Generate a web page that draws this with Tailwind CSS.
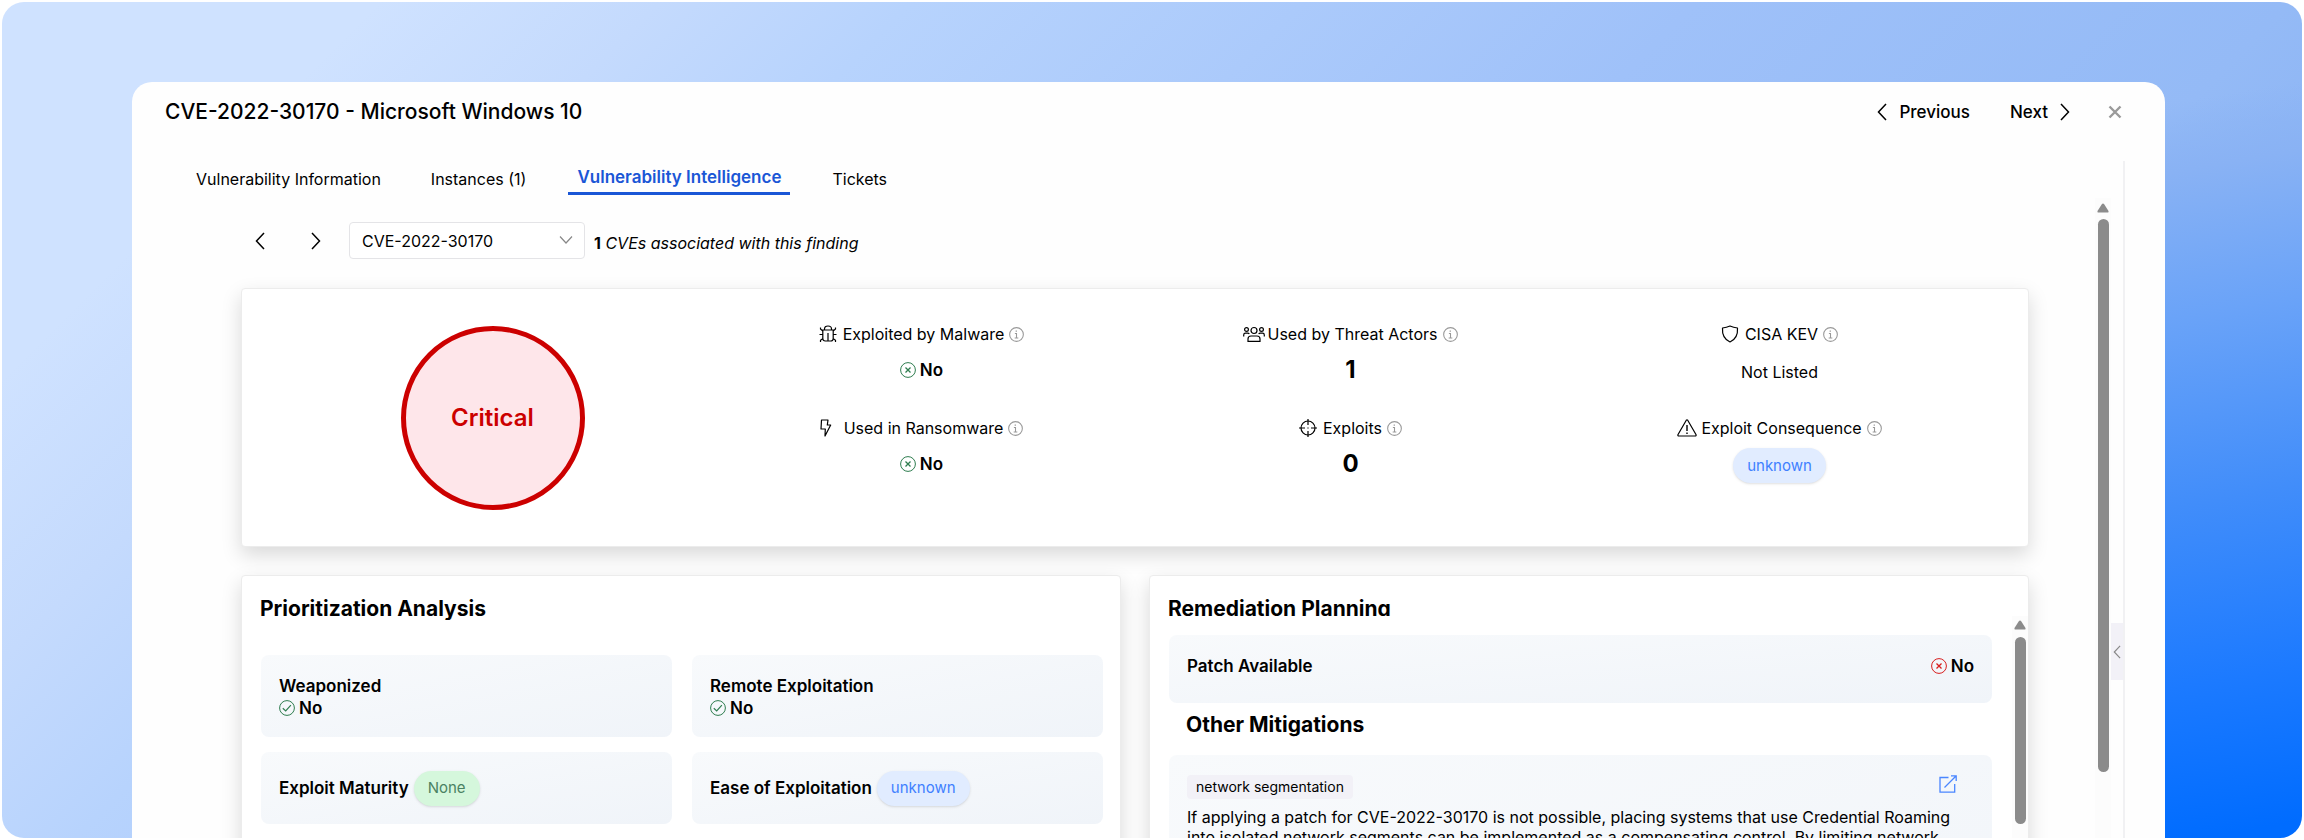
<!doctype html>
<html lang="en">
<head>
  <meta charset="UTF-8">
  <meta name="viewport" content="width=device-width, initial-scale=1.0">
  <title>CVE-2022-30170 - Microsoft Windows 10</title>
  <script src="https://cdn.jsdelivr.net/npm/@tailwindcss/browser@4"></script>
</head>

<body class="bg-white p-[2px] font-['Inter',sans-serif] text-base leading-6 text-black">

  <!-- Icon sprite -->
  <svg class="hidden">
    <symbol id="chevron-left" viewBox="0 0 10 18" fill="none" stroke="currentColor" stroke-width="1.5"><path d="M9 1 1.5 9 9 17"/></symbol>
    <symbol id="chevron-right" viewBox="0 0 10 18" fill="none" stroke="currentColor" stroke-width="1.5"><path d="m1 1 7.500 8L1 17"/></symbol>
    <symbol id="info" viewBox="0 0 14 14" fill="none" stroke="currentColor"><circle cx="7" cy="7" r="6.400"/><path d="M5.500 6H7v4.300M5.300 10.300h3.400"/><path d="M6.200 3.800h1.200" stroke-width="1.300"/></symbol>
    <symbol id="x-circle" viewBox="0 0 16 16" fill="none" stroke="currentColor"><circle cx="8" cy="8" r="7.400"/><path d="m5.500 5.500 5 5m0-5-5 5" stroke-width="1.300"/></symbol>
    <symbol id="check-circle" viewBox="0 0 16 16" fill="none" stroke="currentColor"><circle cx="8" cy="8" r="7.400"/><path d="m3.800 8.300 2.900 2.600 5.200-5.700" stroke-width="1.200"/></symbol>
    <symbol id="bug" viewBox="0 0 18 18" fill="none" stroke="currentColor" stroke-width="1.200"><path d="M3.800 5h10.400v8.500q0 2.500-2.500 2.500H6.300q-2.500 0-2.500-2.500zM5.500 5V4q0-3 3.500-3t3.500 3v1M9 8v8M.5 9.500h3.300M14.200 9.500h3.300M3.800 6 1.500 4V2.500M14.200 6l2.300-2V2.500M4 13.500l-2.500 1.700V17M14 13.500l2.500 1.700V17"/></symbol>
    <symbol id="people" viewBox="0 0 22 16" fill="none" stroke="currentColor" stroke-width="1.200"><circle cx="11" cy="4.500" r="3"/><circle cx="3.500" cy="3.500" r="1.900"/><circle cx="18.500" cy="3.500" r="1.900"/><path d="M5 15.300v-2.300q0-3 3-3h6q3 0 3 3v2.300zM.7 10.500V9q0-1.800 1.800-1.800h2.300q1 0 1.500.8M21.300 10.500V9q0-1.800-1.800-1.800h-2.300q-1 0-1.500.8"/></symbol>
    <symbol id="lightning" viewBox="0 0 12 18" fill="none" stroke="currentColor" stroke-width="1.200" stroke-linejoin="round"><path d="M1.500 1H8L7.300 6h3.400L5 17l.3-7H1z"/></symbol>
    <symbol id="crosshair" viewBox="0 0 18 18" fill="none" stroke="currentColor" stroke-width="1.200"><circle cx="9" cy="9" r="7"/><path d="M9 0v6M9 12v6M0 9h6M12 9h6M9 8.500v1"/></symbol>
    <symbol id="shield" viewBox="0 0 18 18" fill="none" stroke="currentColor" stroke-width="1.200" stroke-linejoin="round"><path d="M9 1q-3.500 1.500-7.500 2c-.5 7 2 11.500 7.500 14 5.500-2.500 8-7 7.500-14Q12.500 2.500 9 1z"/></symbol>
    <symbol id="warning" viewBox="0 0 20 18" fill="none" stroke="currentColor" stroke-width="1.200" stroke-linejoin="round"><path d="M9.300 1.200q.7-.8 1.400 0l8.400 14.600q.2 1.200-.8 1.200H1.700q-1 0-.8-1.200z"/><path d="M10 6v6M10 13.500v1.500" stroke-width="1.400"/></symbol>
    <symbol id="external" viewBox="0 0 18 18" fill="none" stroke="currentColor" stroke-width="1.300"><path d="M9.500 2.500H1v14.700h14.700V9M5.500 12.500 17 1M12 .8h5.200V6"/></symbol>
    <symbol id="arrow-up" viewBox="0 0 12 10"><path d="M6 .5q.7 0 1.200.8L11.500 8q.5 1.500-.8 1.500H1.300Q0 9.500.5 8l4.300-6.700Q5.300.5 6 .5z" fill="currentColor"/></symbol>
  </svg>

  <div class="flex h-[calc(100vh-4px)] flex-col overflow-hidden rounded-[22px] bg-[linear-gradient(170deg,#89b2f400_12%,#89b2f4_20%,#6aa3f8_37%,#418dfa_59%,#1c7aff_80%,#006cff_98%),linear-gradient(135deg,#cfe2ff_12%,#c4dafd_21%,#b7d3fd_29%,#9fc1f9_54%,#94baf6_73%,#8ab3f4_82%)] bg-[length:142px_100%,100%_100%] bg-right bg-no-repeat pt-20 pr-[137px] pl-[130px]">
    <div class="flex min-h-0 flex-1 flex-col rounded-t-[20px] bg-[#fefefe]">

      <!-- Title bar -->
      <header class="mb-[19px] flex h-15 shrink-0 items-center pr-[43px] pl-[33px]">
        <h1 class="flex-1 text-[21px] font-medium">CVE-2022-30170 - Microsoft Windows 10</h1>
        <button class="flex items-center gap-3 text-[17px] font-medium"><svg class="h-[18px] w-[10px]"><use href="#chevron-left"/></svg>Previous</button>
        <button class="ml-10 flex items-center gap-3 text-[17px] font-medium">Next<svg class="h-[18px] w-[10px]"><use href="#chevron-right"/></svg></button>
        <button class="ml-[38px] text-[#9a9a9a]" aria-label="Close">
          <svg class="size-3.5" viewBox="0 0 14 14" fill="none" stroke="currentColor" stroke-width="2.400"><path d="m1.500 1.500 11 11M12.500 1.500l-11 11"/></svg>
        </button>
      </header>

      <div class="mr-10 flex min-h-0 flex-1 flex-col border-r-2 border-[#f1f1f3]">
        <!-- Tabs -->
        <nav class="flex h-[37px] shrink-0 items-center gap-[34px] pb-0.5 pl-14">
          <button class="px-2">Vulnerability Information</button>
          <button class="px-2">Instances (1)</button>
          <button class="h-[34px] self-start border-b-[3px] border-[#1a56d6] px-[9px] text-[17px] font-semibold text-[#1a56d6]">Vulnerability Intelligence</button>
          <button class="px-2">Tickets</button>
        </nav>

        <div class="flex min-h-0 flex-1">
          <main class="min-w-0 flex-1 overflow-hidden pt-6 pr-[66px] pl-[109px]">

            <!-- CVE picker -->
            <div class="mb-[29px] flex h-[37px] items-center">
              <button class="flex w-[38px] justify-center" aria-label="Previous CVE"><svg class="h-[18px] w-[10px]"><use href="#chevron-left"/></svg></button>
              <button class="ml-[18px] flex w-[38px] justify-center" aria-label="Next CVE"><svg class="h-[18px] w-[10px]"><use href="#chevron-right"/></svg></button>
              <div class="relative ml-3.5">
                <select aria-label="CVE" class="h-[37px] w-[236px] appearance-none rounded border border-[#e4e4e7] bg-white px-3">
                  <option>CVE-2022-30170</option>
                </select>
                <svg class="pointer-events-none absolute top-3.5 right-3 h-2 w-3.5 text-[#888888]" viewBox="0 0 14 8" fill="none" stroke="currentColor" stroke-width="1.200"><path d="m1 .5 6 6.500 6-6.500"/></svg>
              </div>
              <p class="pt-1 pl-[9px]"><strong class="font-bold">1</strong> <em>CVEs associated with this finding</em></p>
            </div>

            <!-- Summary -->
            <section class="mb-7 grid min-h-[259px] grid-cols-4 rounded border border-[#ececec] bg-white pt-[33px] pr-[34px] pb-[30px] pl-9 shadow-[0_8px_20px_rgba(0,0,0,0.15)]">
              <div class="mt-1 flex size-[184px] items-center justify-center justify-self-center rounded-full border-[5px] border-[#cc0000] bg-[#fee6ea] text-2xl font-semibold text-[#cc0000]">Critical</div>
              <div class="flex flex-col items-center">
                <h2 class="flex items-center"><svg class="mr-1.5 size-[18px]"><use href="#bug"/></svg>Exploited by Malware<svg class="ml-[5px] size-[15px] text-[#999999]"><use href="#info"/></svg></h2>
                <p class="mt-1.5 mb-7 flex h-9 items-center gap-1 text-[17px] font-semibold"><svg class="size-4 text-[#2e7d4f]"><use href="#x-circle"/></svg>No</p>
                <h2 class="flex items-center"><svg class="mr-3 h-[18px] w-3"><use href="#lightning"/></svg>Used in Ransomware<svg class="ml-[5px] size-[15px] text-[#999999]"><use href="#info"/></svg></h2>
                <p class="mt-1.5 flex h-9 items-center gap-1 text-[17px] font-semibold"><svg class="size-4 text-[#2e7d4f]"><use href="#x-circle"/></svg>No</p>
              </div>
              <div class="flex flex-col items-center">
                <h2 class="flex items-center"><svg class="mr-0.5 h-4 w-[22px]"><use href="#people"/></svg>Used by Threat Actors<svg class="ml-[5px] size-[15px] text-[#999999]"><use href="#info"/></svg></h2>
                <p class="mt-1.5 mb-7 flex h-9 items-center text-2xl font-bold">1</p>
                <h2 class="flex items-center"><svg class="mr-1.5 size-[18px]"><use href="#crosshair"/></svg>Exploits<svg class="ml-[5px] size-[15px] text-[#999999]"><use href="#info"/></svg></h2>
                <p class="mt-1.5 flex h-9 items-center text-2xl font-bold">0</p>
              </div>
              <div class="flex flex-col items-center">
                <h2 class="flex items-center"><svg class="mr-1.5 size-[18px]"><use href="#shield"/></svg>CISA KEV<svg class="ml-[5px] size-[15px] text-[#999999]"><use href="#info"/></svg></h2>
                <p class="mt-2 mb-[26px] flex h-9 items-center">Not Listed</p>
                <h2 class="flex items-center"><svg class="mr-1 h-[18px] w-5"><use href="#warning"/></svg>Exploit Consequence<svg class="ml-[5px] size-[15px] text-[#999999]"><use href="#info"/></svg></h2>
                <p class="mt-2 flex h-[35px] items-center rounded-full bg-[#e1ecff] px-3.5 text-[15px] text-[#4080ff] shadow-sm">unknown</p>
              </div>
            </section>

            <div class="grid grid-cols-2 gap-7">
              <!-- Prioritization -->
              <section class="h-[420px] rounded border border-[#ececec] bg-white pt-5 pr-[17px] pl-[19px] shadow-[0_8px_20px_rgba(0,0,0,0.15)]">
                <h2 class="-ml-px h-6 overflow-hidden text-[21px] leading-[26px] font-bold">Prioritization Analysis</h2>
                <div class="mt-[35px] grid grid-cols-2 gap-x-5 gap-y-[15px]">
                  <div class="h-[82px] rounded-lg bg-linear-to-br from-[#f8fafc] to-[#f0f4f9] px-[18px] pt-5 text-[17px] leading-[22px] font-semibold">
                    <h3>Weaponized</h3>
                    <p class="flex items-center gap-1"><svg class="size-4 text-[#2e7d4f]"><use href="#check-circle"/></svg>No</p>
                  </div>
                  <div class="h-[82px] rounded-lg bg-linear-to-br from-[#f8fafc] to-[#f0f4f9] px-[18px] pt-5 text-[17px] leading-[22px] font-semibold">
                    <h3>Remote Exploitation</h3>
                    <p class="flex items-center gap-1"><svg class="size-4 text-[#2e7d4f]"><use href="#check-circle"/></svg>No</p>
                  </div>
                  <div class="flex h-[72px] items-center gap-[5px] rounded-lg bg-linear-to-br from-[#f8fafc] to-[#f0f4f9] px-[18px]">
                    <h3 class="text-[17px] font-semibold">Exploit Maturity</h3>
                    <span class="flex h-[35px] items-center rounded-full bg-[#d5f7dc] px-3.5 text-[15px] text-[#4a8262] shadow-sm">None</span>
                  </div>
                  <div class="flex h-[72px] items-center gap-[5px] rounded-lg bg-linear-to-br from-[#f8fafc] to-[#f0f4f9] px-[18px]">
                    <h3 class="text-[17px] font-semibold">Ease of Exploitation</h3>
                    <span class="flex h-[35px] items-center rounded-full bg-[#e1ecff] px-3.5 text-[15px] text-[#4080ff] shadow-sm">unknown</span>
                  </div>
                </div>
              </section>

              <!-- Remediation -->
              <section class="h-[420px] rounded border border-[#ececec] bg-white pt-5 pl-[19px] shadow-[0_8px_20px_rgba(0,0,0,0.15)]">
                <h2 class="-ml-px h-5 overflow-hidden text-[21px] leading-[26px] font-bold">Remediation Planning</h2>
                <div class="flex">
                  <div class="min-w-0 flex-1 pt-[19px] pr-5">
                    <div class="flex h-[68px] justify-between rounded-lg bg-linear-to-br from-[#f8fafc] to-[#f0f4f9] px-[18px] pt-[19px] text-[17px] font-semibold">
                      <h3>Patch Available</h3>
                      <p class="flex h-6 items-center gap-1"><svg class="size-4 text-[#d81e1e]"><use href="#x-circle"/></svg>No</p>
                    </div>
                    <h2 class="mt-[9px] mb-[17px] pl-[17px] text-[21px] leading-[26px] font-bold">Other Mitigations</h2>
                    <div class="h-[300px] rounded-lg bg-linear-to-br from-[#f8fafc] to-[#f0f4f9] px-[18px] pt-5">
                      <div class="flex items-start justify-between pr-[17px]">
                        <span class="rounded bg-[#f2f1f7] px-[9px] text-sm leading-6">network segmentation</span>
                        <a href="#" aria-label="Open mitigation" class="text-[#4a86ff]"><svg class="size-[18px]"><use href="#external"/></svg></a>
                      </div>
                      <p class="mt-2 leading-5">If applying a patch for CVE-2022-30170 is not possible, placing systems that use Credential Roaming into isolated network segments can be implemented as a compensating control. By limiting network</p>
                    </div>
                  </div>
                  <div class="flex w-4 flex-col items-center bg-[#fcfcfc] pt-1">
                    <svg class="h-2.5 w-3 text-[#8b8b8b]"><use href="#arrow-up"/></svg>
                    <div class="mt-[7px] h-[187px] w-[11px] rounded-full bg-[#8b8b8b]"></div>
                  </div>
                </div>
              </section>
            </div>
          </main>

          <!-- Page scrollbar -->
          <div class="flex w-4 flex-col items-center bg-[#fcfcfc] pt-[5px]">
            <svg class="h-2.5 w-3 text-[#8b8b8b]"><use href="#arrow-up"/></svg>
            <div class="mt-1.5 h-[553px] w-[11px] rounded-full bg-[#8b8b8b]"></div>
          </div>
          <button class="mt-[425px] flex h-[57px] w-3 items-center justify-center bg-[#f2f1f7] text-[#888888]" aria-label="Expand side panel">
            <svg class="h-3.5 w-2"><use href="#chevron-left"/></svg>
          </button>
        </div>
      </div>
    </div>
  </div>
</body>
</html>
